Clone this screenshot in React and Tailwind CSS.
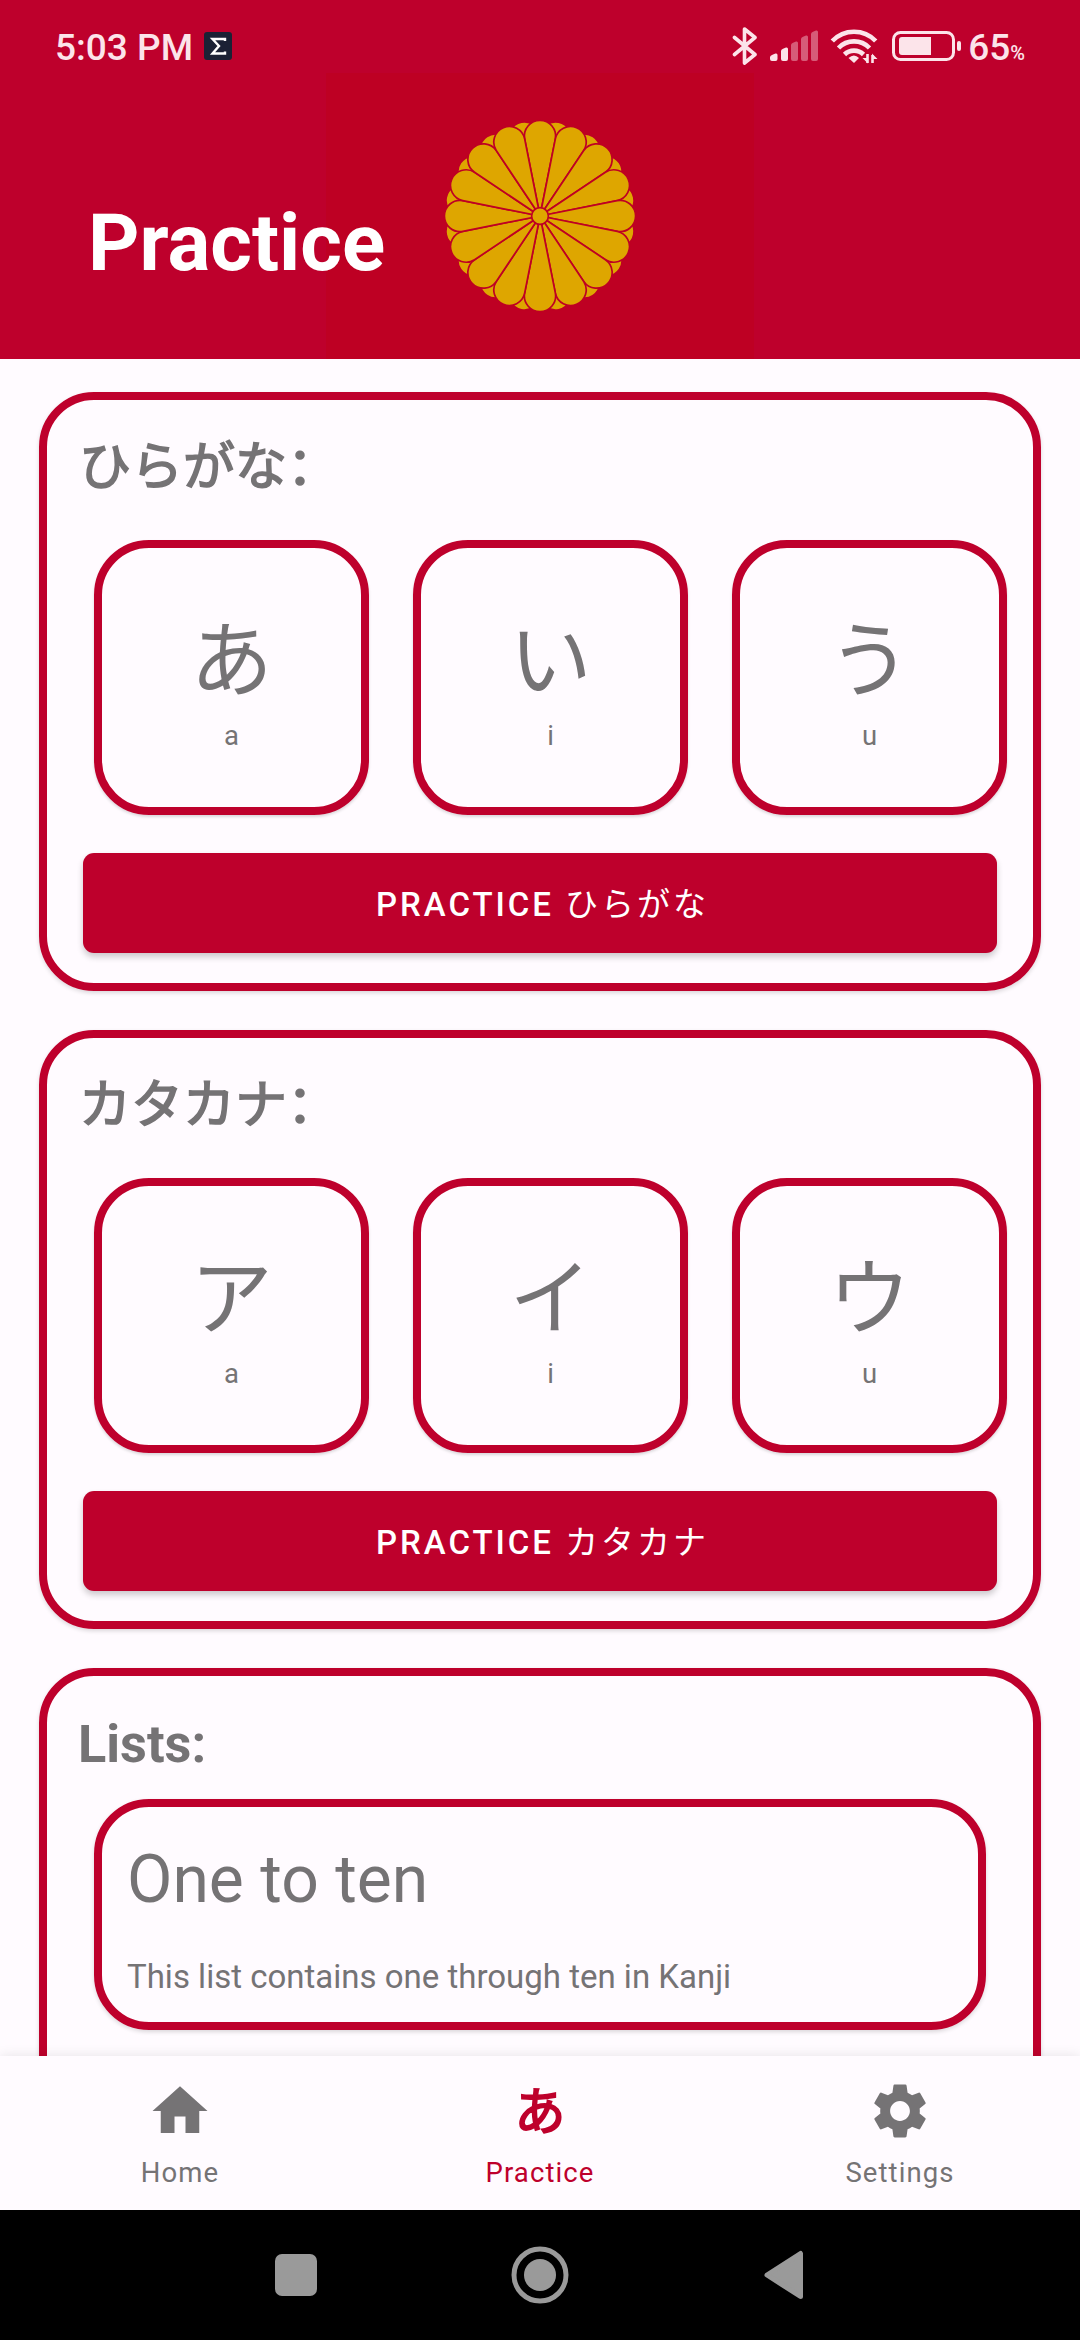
import { MdHome, MdSettings } from "react-icons/md";

const CREST_PETALS = Array.from({ length: 16 }, (_, i) => i * 22.5);
const PETAL = "M0 0 L-15.35 -77.2 A15.6 15.6 0 1 1 15.35 -77.2 Z";

function Crest() {
  return (
    <svg className="h-[286px] w-[428px]" viewBox="-214 -143 428 286" fill="#dea600" stroke="#be0023" strokeWidth="1.7">
      {CREST_PETALS.map((a) => (
        <path key={`b${a}`} d={PETAL} transform={`rotate(${a + 11.25})`} />
      ))}
      {CREST_PETALS.map((a) => (
        <path key={a} d={PETAL} transform={`rotate(${a})`} />
      ))}
      <circle r="8.4" />
    </svg>
  );
}

function StatusBar() {
  return (
    <div className="flex h-[73px] items-center pl-[55px] pr-[55px] text-[#fce4ea]">
      <span className="mt-[22px] text-[37px] leading-[44px] font-medium">5:03 PM</span>
      <svg className="mt-[19px] ml-[11px] h-[28px] w-[28px]" viewBox="0 0 28 28">
        <rect width="28" height="28" rx="3" fill="#1b2135" />
        <path d="M21 9V7H8.500L15 14 8.500 21.500H21V19.500" fill="none" stroke="#fff" strokeWidth="2.400" />
      </svg>
      <div className="mt-[19px] ml-auto flex items-center">
        <svg className="h-[40px] w-[26px]" viewBox="0 0 26 40" fill="none" stroke="currentColor" strokeWidth="3.600" strokeLinejoin="round" strokeLinecap="round">
          <path d="M2.500 11.500 23 28.500 12.500 37V3L23 11.500 2.500 28.500" />
        </svg>
        <svg className="ml-[12px] h-[32px] w-[50px]" viewBox="0 0 50 32" fill="currentColor">
          <path d="M0 29V27Q0 25.500 3 24.500L5.500 23.500Q7.500 23 7.500 25V29Q7.500 31 5.500 31H2Q0 31 0 29Z" />
          <path d="M11 29V21Q11 19.500 13 18.800L16 17.500Q18 17 18 19V29Q18 31 16 31H13Q11 31 11 29Z" />
          <g opacity="0.4">
            <path d="M21 29V15Q21 13.500 23 12.800L26 11.500Q28 11 28 13V29Q28 31 26 31H23Q21 31 21 29Z" />
            <path d="M31 29V9Q31 7.500 33 6.800L36 5.500Q38 5 38 7V29Q38 31 36 31H33Q31 31 31 29Z" />
            <path d="M41 29V4Q41 2.500 43 1.800L46 .5Q48 0 48 2V29Q48 31 46 31H43Q41 31 41 29Z" />
          </g>
        </svg>
        <svg className="ml-[10px] h-[36px] w-[48px]" viewBox="0 0 48 36" fill="none" stroke="currentColor" strokeWidth="4.600">
          <path d="M2.300 13A30 30 0 0 1 45.700 13" />
          <path d="M8.500 20A21.500 21.500 0 0 1 39.500 20" />
          <path d="M14.500 26.500A13.500 13.500 0 0 1 33.500 26.500" />
          <path d="M18.500 30Q24 25 29 30L24 35Z" fill="currentColor" stroke="none" />
          <path d="M37.500 26V35M42.500 35V27" strokeWidth="2.600" />
          <path d="M38 35.500 32.500 30H38ZM42 25.500 47.500 31H42Z" fill="currentColor" stroke="none" />
        </svg>
        <svg className="ml-[14px] h-[30px] w-[70px]" viewBox="0 0 70 30">
          <rect x="1.500" y="1.500" width="60" height="27" rx="7" fill="none" stroke="currentColor" strokeWidth="3" />
          <path d="M10 6H39V24H10Q7 24 7 21V9Q7 6 10 6Z" fill="currentColor" />
          <rect x="65" y="10" width="4" height="10" rx="2" fill="currentColor" />
        </svg>
        <span className="mt-[3px] ml-[6px] text-[37px] leading-[30px] font-medium">65</span>
        <span className="mt-[13px] text-[20px] leading-[20px] font-medium">%</span>
      </div>
    </div>
  );
}

function Tile({ kana, romaji }) {
  return (
    <div className="flex h-[275px] w-[275px] shrink-0 flex-col items-center rounded-[55px] border-8 border-[#be002c] pt-[58px] shadow-[0_2px_3px_rgba(0,0,0,0.15)]">
      <span className="text-[82.5px] leading-[112px]">{kana}</span>
      <span className="mt-[2px] text-[27.5px] leading-[32px]">{romaji}</span>
    </div>
  );
}

function KanaCard({ name, tiles }) {
  return (
    <section className="h-[599px] shrink-0 rounded-[55px] border-8 border-[#be002c] shadow-[0_2px_4px_rgba(0,0,0,0.15)]">
      <h2
        lang="zh"
        className="mt-[25px] ml-[32px] h-[76px] font-['Noto_Sans_CJK_SC',sans-serif] text-[52px] leading-[76px] font-normal [-webkit-text-stroke:1.6px_#757375]"
      >
        {name}：
      </h2>
      <div className="mt-[39px] ml-[47px] flex gap-[44px]">
        {tiles.map(([kana, romaji]) => (
          <Tile key={kana} kana={kana} romaji={romaji} />
        ))}
      </div>
      <button className="mt-[38px] ml-[36px] flex h-[100px] w-[914px] items-center justify-center rounded-[11px] bg-[#be002c] pt-[3px] pl-[5px] text-[33px] font-medium tracking-[2.95px] text-white shadow-[0_4px_6px_rgba(0,0,0,0.2)]">
        <span className="whitespace-pre">
          PRACTICE <span className="font-normal">{name}</span>
        </span>
      </button>
    </section>
  );
}

function NavItem({ label, active, children }) {
  return (
    <div className={`flex flex-1 flex-col items-center pt-[22px] ${active ? "text-[#be002c]" : "text-[#757375]"}`}>
      <div className="flex h-[66px] w-[66px] items-center justify-center">{children}</div>
      <span className="mt-[13px] text-[27.5px] leading-[32px] tracking-[1.1px]">{label}</span>
    </div>
  );
}

export default function App() {
  return (
    <div className="flex h-[2340px] w-[1080px] flex-col overflow-hidden bg-[#fffbff] font-['Roboto','Noto_Sans_CJK_JP',sans-serif] text-[#757375]">
      <header className="relative h-[359px] shrink-0 bg-[#be002c]">
        <StatusBar />
        <div className="mx-auto h-[286px] w-[428px] bg-[#be0023]">
          <Crest />
        </div>
        <h1 className="absolute top-[196px] left-[88px] text-[80px] leading-[94px] font-bold text-white">Practice</h1>
      </header>

      <main className="flex min-h-0 flex-1 flex-col gap-[39px] overflow-hidden px-[39px] pt-[33px]">
        <KanaCard name="ひらがな" tiles={[["あ", "a"], ["い", "i"], ["う", "u"]]} />
        <KanaCard name="カタカナ" tiles={[["ア", "a"], ["イ", "i"], ["ウ", "u"]]} />
        <section className="h-[599px] shrink-0 rounded-[55px] border-8 border-[#be002c] shadow-[0_2px_4px_rgba(0,0,0,0.15)]">
          <h2 className="mt-[38px] ml-[31px] text-[52.25px] leading-[62px] font-bold">Lists:</h2>
          <div className="mt-[23px] ml-[47px] h-[231px] w-[892px] rounded-[55px] border-8 border-[#be002c] pt-[34px] pl-[25px] shadow-[0_2px_4px_rgba(0,0,0,0.15)]">
            <div className="text-[66px] leading-[78px]">One to ten</div>
            <div className="mt-[38px] text-[33px] leading-[40px]">This list contains one through ten in Kanji</div>
          </div>
        </section>
      </main>

      <nav className="relative flex h-[154px] shrink-0 bg-[#fffbff] shadow-[0_0_12px_rgba(0,0,0,0.1)]">
        <NavItem label="Home">
          <MdHome size={66} />
        </NavItem>
        <NavItem label="Practice" active>
          <span className="mt-[3px] text-[51px] leading-[66px] [-webkit-text-stroke:1.8px_#be002c]">あ</span>
        </NavItem>
        <NavItem label="Settings">
          <MdSettings size={66} />
        </NavItem>
      </nav>

      <div className="relative flex h-[130px] shrink-0 items-center bg-black">
        <div className="ml-[275px] h-[42px] w-[42px] rounded-[7px] bg-[#9a9a9a]" />
        <svg className="ml-[194px] h-[58px] w-[58px]" viewBox="0 0 58 58">
          <circle cx="29" cy="29" r="26" fill="none" stroke="#9a9a9a" strokeWidth="5" />
          <circle cx="29" cy="29" r="16" fill="#9a9a9a" />
        </svg>
        <svg className="ml-[195px] h-[50px] w-[40px]" viewBox="0 0 40 50">
          <path d="M3 25 36.500 3.500V46.500Z" fill="#9a9a9a" stroke="#9a9a9a" strokeWidth="5" strokeLinejoin="round" />
        </svg>
      </div>
    </div>
  );
}
